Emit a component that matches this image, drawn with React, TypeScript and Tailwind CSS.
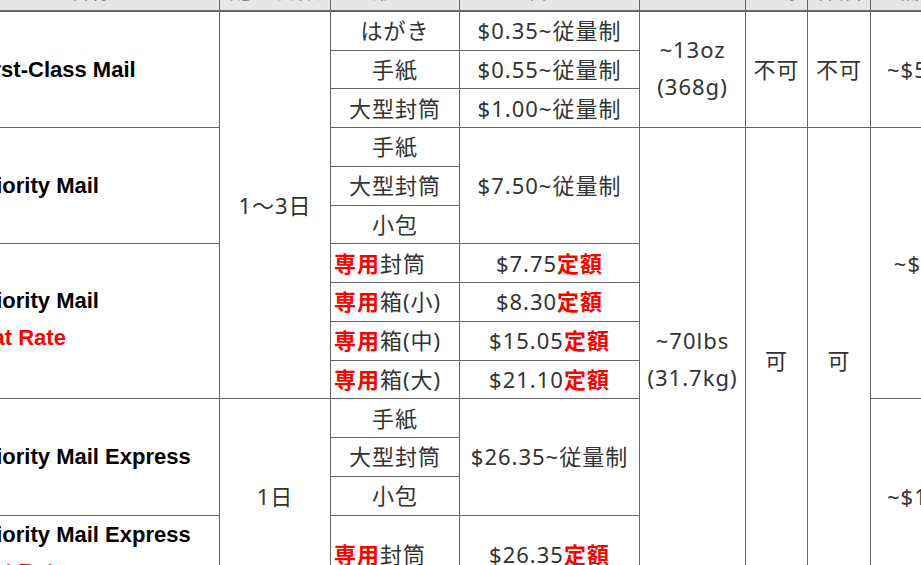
import React from "react";

const R = ({ children }: { children: React.ReactNode }) => (
  <span className="text-[#ff0000] font-bold">{children}</span>
);

const cell =
  "border border-[#666666] text-center align-middle p-0 whitespace-nowrap";
const head =
  "border border-[#666666] border-b-2 text-center align-middle p-0 pb-[6px] leading-[30px] whitespace-nowrap font-normal";
const name =
  "border border-[#666666] text-left align-middle p-0 pl-[12px] whitespace-nowrap font-['Liberation_Sans','Noto_Sans_CJK_JP',sans-serif] font-bold text-black text-[22px] tracking-[0px]";
const left =
  "border border-[#666666] text-left align-middle p-0 pl-[3px] whitespace-nowrap";

export default function App() {
  return (
    <div className="w-[921px] h-[565px] overflow-hidden bg-white">
      <table className="table-fixed border-collapse w-[1011px] -ml-[40px] -mt-[28px] font-['Noto_Sans','Noto_Sans_CJK_JP',sans-serif] text-[22px] leading-[37px] tracking-[1px] text-[#333333]">
        <colgroup>
          <col className="w-[259px]" />
          <col className="w-[111px]" />
          <col className="w-[129px]" />
          <col className="w-[180px]" />
          <col className="w-[106px]" />
          <col className="w-[62px]" />
          <col className="w-[63px]" />
          <col className="w-[101px]" />
        </colgroup>
        <thead>
          <tr className="h-[38.75px] bg-[#e7e6e6]">
            <th className={head}>名称</th>
            <th className={head}>配達日数</th>
            <th className={head}>形状</th>
            <th className={head}>料金</th>
            <th className={head}>重量</th>
            <th className={head}>追跡</th>
            <th className={head}>保険</th>
            <th className={head}>補償</th>
          </tr>
        </thead>
        <tbody>
          <tr className="h-[38.75px]">
            <td rowSpan={3} className={name}>First-Class Mail</td>
            <td rowSpan={10} className={cell}>1〜3日</td>
            <td className={cell}>はがき</td>
            <td className={cell}>$0.35~従量制</td>
            <td rowSpan={3} className={`${cell} pb-[4px]`}>
              ~13oz
              <br />
              (368g)
            </td>
            <td rowSpan={3} className={cell}>不可</td>
            <td rowSpan={3} className={cell}>不可</td>
            <td rowSpan={3} className={cell}>~$500</td>
          </tr>
          <tr className="h-[38.75px]">
            <td className={cell}>手紙</td>
            <td className={cell}>$0.55~従量制</td>
          </tr>
          <tr className="h-[38.75px]">
            <td className={cell}>大型封筒</td>
            <td className={cell}>$1.00~従量制</td>
          </tr>
          <tr className="h-[38.75px]">
            <td rowSpan={3} className={name}>Priority Mail</td>
            <td className={cell}>手紙</td>
            <td rowSpan={3} className={cell}>$7.50~従量制</td>
            <td rowSpan={11} className={`${cell} pb-[4px]`}>
              ~70lbs
              <br />
              (31.7kg)
            </td>
            <td rowSpan={11} className={cell}>可</td>
            <td rowSpan={11} className={cell}>可</td>
            <td rowSpan={7} className={cell}>~$50</td>
          </tr>
          <tr className="h-[38.75px]">
            <td className={cell}>大型封筒</td>
          </tr>
          <tr className="h-[38.75px]">
            <td className={cell}>小包</td>
          </tr>
          <tr className="h-[38.75px]">
            <td rowSpan={4} className={`${name} pb-[4px]`}>
              Priority Mail
              <br />
              <span className="text-[#ff0000]">Flat Rate</span>
            </td>
            <td className={left}>
              <R>専用</R>封筒
            </td>
            <td className={cell}>
              $7.75<R>定額</R>
            </td>
          </tr>
          <tr className="h-[38.75px]">
            <td className={left}>
              <R>専用</R>箱(小)
            </td>
            <td className={cell}>
              $8.30<R>定額</R>
            </td>
          </tr>
          <tr className="h-[38.75px]">
            <td className={left}>
              <R>専用</R>箱(中)
            </td>
            <td className={cell}>
              $15.05<R>定額</R>
            </td>
          </tr>
          <tr className="h-[38.75px]">
            <td className={left}>
              <R>専用</R>箱(大)
            </td>
            <td className={cell}>
              $21.10<R>定額</R>
            </td>
          </tr>
          <tr className="h-[38.75px]">
            <td rowSpan={3} className={name}>Priority Mail Express</td>
            <td rowSpan={4} className={cell}>1日</td>
            <td className={cell}>手紙</td>
            <td rowSpan={3} className={cell}>$26.35~従量制</td>
            <td rowSpan={4} className={cell}>~$100</td>
          </tr>
          <tr className="h-[38.75px]">
            <td className={cell}>大型封筒</td>
          </tr>
          <tr className="h-[38.75px]">
            <td className={cell}>小包</td>
          </tr>
          <tr className="h-[77.5px]">
            <td className={`${name} pb-[4px]`}>
              Priority Mail Express
              <br />
              <span className="text-[#ff0000]">Flat Rate</span>
            </td>
            <td className={left}>
              <R>専用</R>封筒
            </td>
            <td className={cell}>
              $26.35<R>定額</R>
            </td>
          </tr>
        </tbody>
      </table>
    </div>
  );
}
